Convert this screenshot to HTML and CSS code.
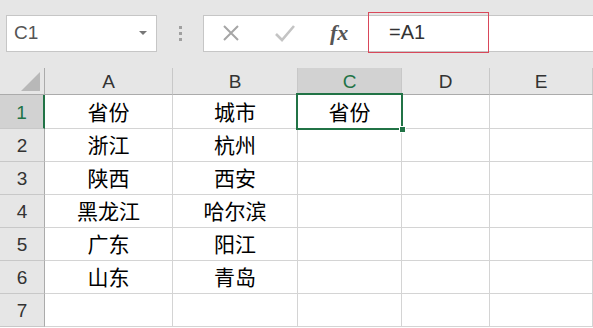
FILE: index.html
```html
<!DOCTYPE html>
<html lang="zh-CN">
<head>
    <meta charset="UTF-8">
    <title>Excel</title>
    <link rel="stylesheet" href="styles.css">
</head>
<body>
    <div class="toolbar">
        <div class="name-box">
            <span class="name-text">C1</span>
            <span class="name-arrow"></span>
        </div>
        <div class="grip"><i></i><i></i><i></i></div>
        <div class="fx-group">
            <svg class="tb-icon" width="20" height="20" viewBox="0 0 20 20"><path d="M3 3 L17 17 M17 3 L3 17" stroke="#a6a6a6" stroke-width="2" fill="none"/></svg>
            <svg class="tb-icon" width="22" height="20" viewBox="0 0 22 20"><path d="M2 11 L8 17 L20 3" stroke="#c4c4c4" stroke-width="2.6" fill="none"/></svg>
            <span class="fx">fx</span>
        </div>
        <div class="formula">
            <div class="formula-text">=A1</div>
        </div>
    </div>

    <div class="sheet">
        <div class="corner"><span class="tri"></span></div>
        <div class="col-head">A</div>
        <div class="col-head">B</div>
        <div class="col-head active">C</div>
        <div class="col-head">D</div>
        <div class="col-head">E</div>

        <div class="row-head active">1</div>
        <div class="cell">省份</div>
        <div class="cell">城市</div>
        <div class="cell selected">省份<span class="handle"></span></div>
        <div class="cell"></div>
        <div class="cell"></div>

        <div class="row-head">2</div>
        <div class="cell">浙江</div>
        <div class="cell">杭州</div>
        <div class="cell"></div>
        <div class="cell"></div>
        <div class="cell"></div>

        <div class="row-head">3</div>
        <div class="cell">陕西</div>
        <div class="cell">西安</div>
        <div class="cell"></div>
        <div class="cell"></div>
        <div class="cell"></div>

        <div class="row-head">4</div>
        <div class="cell">黑龙江</div>
        <div class="cell">哈尔滨</div>
        <div class="cell"></div>
        <div class="cell"></div>
        <div class="cell"></div>

        <div class="row-head">5</div>
        <div class="cell">广东</div>
        <div class="cell">阳江</div>
        <div class="cell"></div>
        <div class="cell"></div>
        <div class="cell"></div>

        <div class="row-head">6</div>
        <div class="cell">山东</div>
        <div class="cell">青岛</div>
        <div class="cell"></div>
        <div class="cell"></div>
        <div class="cell"></div>

        <div class="row-head">7</div>
        <div class="cell"></div>
        <div class="cell"></div>
        <div class="cell"></div>
        <div class="cell"></div>
        <div class="cell"></div>
    </div>
</body>
</html>
```

FILE: styles.css
```css
body {
    margin: 0;
    background: #ffffff;
    font-family: "Liberation Sans", "Noto Sans CJK SC", sans-serif;
    overflow: hidden;
}

/* formula bar */
.toolbar {
    height: 68px;
    background: #e6e6e6;
    display: flex;
    align-items: center;
    padding-left: 6px;
    box-sizing: border-box;
    padding-bottom: 2px;
}

.name-box {
    width: 151px;
    height: 37px;
    box-sizing: border-box;
    background: #fff;
    border: 1px solid #c6c6c6;
    display: flex;
    align-items: center;
    justify-content: space-between;
    padding: 0 9px 0 7px;
}

.name-text {
    font-size: 19px;
    color: #555;
}

.name-arrow {
    width: 0;
    height: 0;
    border-left: 4px solid transparent;
    border-right: 4px solid transparent;
    border-top: 4px solid #777;
}

.grip {
    width: 46px;
    display: flex;
    flex-direction: column;
    align-items: center;
    gap: 3px;
}

.grip i {
    width: 3px;
    height: 3px;
    background: #a0a0a0;
}

.fx-group {
    width: 165px;
    height: 37px;
    box-sizing: border-box;
    background: #fff;
    border: 1px solid #c6c6c6;
    border-right: none;
    display: flex;
    align-items: center;
    padding-left: 17px;
    gap: 33px;
}

.fx {
    font-family: "Liberation Serif", serif;
    font-style: italic;
    font-weight: bold;
    font-size: 22px;
    color: #555;
    margin-left: 1px;
}

.formula {
    flex: 1;
    height: 37px;
    box-sizing: border-box;
    background: #fff;
    border-top: 1px solid #c6c6c6;
    border-bottom: 1px solid #c6c6c6;
    position: relative;
}

.formula-text {
    position: absolute;
    left: 0;
    top: -4px;
    width: 121px;
    height: 41px;
    box-sizing: border-box;
    border: 1px solid #d9485a;
    padding-left: 20px;
    font-size: 20px;
    line-height: 39px;
    color: #333;
}

/* sheet grid */
.sheet {
    display: grid;
    grid-template-columns: 45px 128px 125px 104px 88px 103px;
    grid-template-rows: 27px 34px repeat(6, 33px);
}

.corner,
.col-head,
.row-head {
    background: #e6e6e6;
    box-sizing: border-box;
    border-right: 1px solid #c8c8c8;
    border-bottom: 1px solid #ababab;
    color: #333;
    display: flex;
    align-items: center;
    justify-content: center;
    font-size: 19px;
}

.corner {
    position: relative;
    border-right-color: #ababab;
}

.tri {
    position: absolute;
    right: 4px;
    bottom: 3px;
    width: 0;
    height: 0;
    border-left: 19px solid transparent;
    border-bottom: 19px solid #b8b8b8;
}

.col-head {
    padding-top: 2px;
}

.row-head {
    border-right: 1px solid #ababab;
    border-bottom: 1px solid #c8c8c8;
    padding-top: 2px;
}

.col-head.active {
    background: #d2d2d2;
    color: #217346;
    border-bottom: 2px solid #217346;
}

.row-head.active {
    background: #d2d2d2;
    color: #217346;
    border-right: 2px solid #217346;
}

.cell {
    box-sizing: border-box;
    border-right: 1px solid #d4d4d4;
    border-bottom: 1px solid #d4d4d4;
    display: flex;
    align-items: center;
    justify-content: center;
    font-family: "Noto Sans CJK SC", sans-serif;
    font-size: 21px;
    color: #000;
    padding-bottom: 2px;
}

.cell.selected {
    position: relative;
    border: none;
    outline: 2px solid #217346;
    outline-offset: -1px;
    margin: -1px 0 0 -1px;
    width: calc(100% + 1px);
    height: calc(100% + 1px);
}

.handle {
    position: absolute;
    right: -4px;
    bottom: -4px;
    width: 5px;
    height: 5px;
    background: #217346;
    border: 1px solid #fff;
}
```
